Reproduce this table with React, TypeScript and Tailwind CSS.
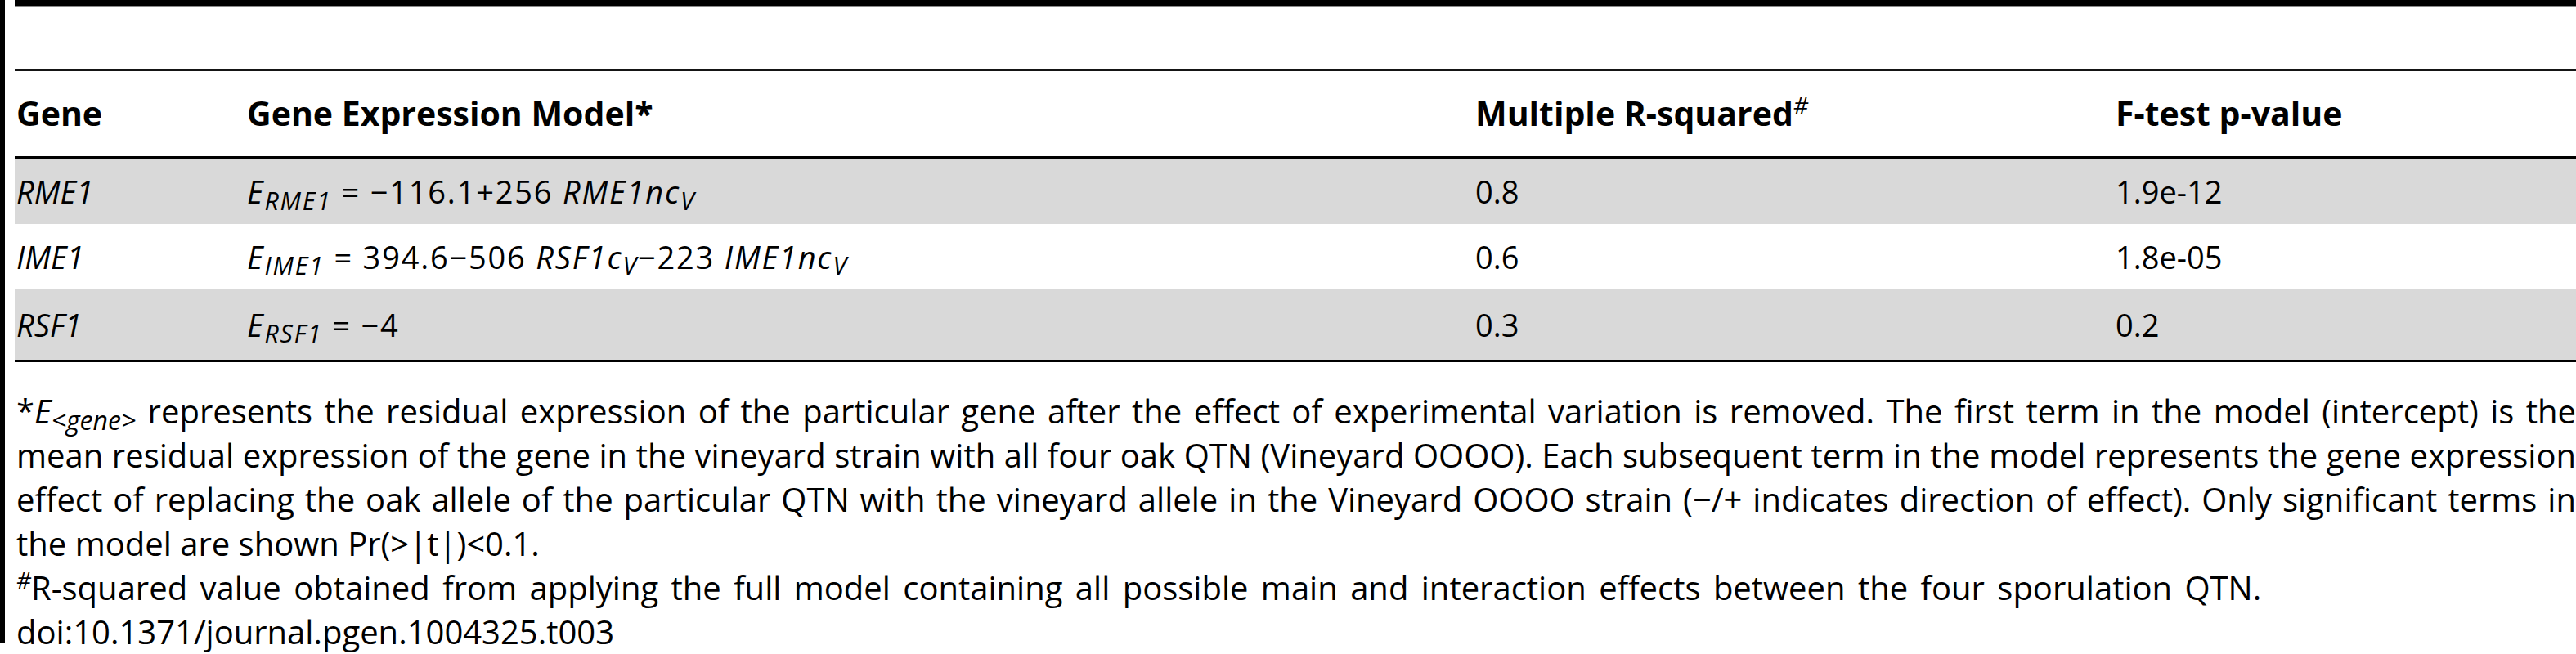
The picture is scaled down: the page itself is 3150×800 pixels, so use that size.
import type { ReactNode } from "react";

type Row = {
  gene: string;
  model: ReactNode;
  r2: string;
  p: string;
  rowClass: string;
};

const rows: Row[] = [
  {
    gene: "RME1",
    model: (
      <>
        <i>E</i>
        <sub className="text-[0.8em] italic">RME1</sub> = −116.1+256 <i>RME1nc</i>
        <sub className="text-[0.8em] italic">V</sub>
      </>
    ),
    r2: "0.8",
    p: "1.9e-12",
    rowClass: "h-[80px] bg-[#d9d9d9]",
  },
  {
    gene: "IME1",
    model: (
      <>
        <i>E</i>
        <sub className="text-[0.8em] italic">IME1</sub> = 394.6−506 <i>RSF1c</i>
        <sub className="text-[0.8em] italic">V</sub>−223 <i>IME1nc</i>
        <sub className="text-[0.8em] italic">V</sub>
      </>
    ),
    r2: "0.6",
    p: "1.8e-05",
    rowClass: "h-[79px] bg-white",
  },
  {
    gene: "RSF1",
    model: (
      <>
        <i>E</i>
        <sub className="text-[0.8em] italic">RSF1</sub> = −4
      </>
    ),
    r2: "0.3",
    p: "0.2",
    rowClass: "h-[87px] bg-[#d9d9d9]",
  },
];

const cols = "grid grid-cols-[282px_1502px_783px_1fr]";

export default function App() {
  return (
    <div className="flex h-[800px] w-[3150px] overflow-hidden bg-white font-['Open_Sans',sans-serif] text-black">
      <div className="h-[787px] w-[6px] shrink-0 bg-black" />
      <div className="ml-[12px] flex min-w-0 flex-1 flex-col">
        <div className="h-[7px] bg-black" />
        <div className="h-[2px] bg-[#8a8a8a]" />
        <div className="h-[75px]" />
        <div className="h-[3px] bg-[#151515]" />

        {/* header */}
        <div className={`${cols} h-[104px] pt-[23px] text-[41px] font-bold leading-[56px]`}>
          <div className="pl-[2px]">Gene</div>
          <div className="pl-[2px]">Gene Expression Model*</div>
          <div className="pl-[2px]">
            Multiple R-squared
            <sup className="text-[0.7em] font-normal italic">#</sup>
          </div>
          <div className="pl-[2px]">F-test p-value</div>
        </div>
        <div className="h-[3px] bg-black" />

        {rows.map((r) => (
          <div key={r.gene} className={`${cols} ${r.rowClass} items-center text-[38px] leading-[52px]`}>
            <div className="pl-[2px] italic">{r.gene}</div>
            <div className="whitespace-nowrap pl-[2px] tracking-[1.8px]">{r.model}</div>
            <div className="pl-[2px]">{r.r2}</div>
            <div className="pl-[2px]">{r.p}</div>
          </div>
        ))}
        <div className="h-[3px] bg-black" />

        {/* footnotes */}
        <div className="pl-[2px] pt-[33px] text-[40px] leading-[54px]">
          <div className="text-justify [text-align-last:justify] [word-spacing:-1px]">
            *<i>E</i>
            <sub className="text-[0.8em] italic">&lt;gene&gt;</sub> represents the residual expression of the
            particular gene after the effect of experimental variation is removed. The first term in the model
            (intercept) is the
          </div>
          <div className="text-justify [text-align-last:justify] [word-spacing:-1px]">
            mean residual expression of the gene in the vineyard strain with all four oak QTN (Vineyard OOOO). Each
            subsequent term in the model represents the gene expression
          </div>
          <div className="text-justify [text-align-last:justify] [word-spacing:-1px]">
            effect of replacing the oak allele of the particular QTN with the vineyard allele in the Vineyard OOOO
            strain (−/+ indicates direction of effect). Only significant terms in
          </div>
          <div className="whitespace-nowrap">the model are shown Pr(&gt;|t|)&lt;0.1.</div>
          <div className="whitespace-nowrap [word-spacing:5px]">
            <sup className="text-[0.7em] italic">#</sup>R-squared value obtained from applying the full model
            containing all possible main and interaction effects between the four sporulation QTN.
          </div>
          <div className="whitespace-nowrap">doi:10.1371/journal.pgen.1004325.t003</div>
        </div>
      </div>
    </div>
  );
}
